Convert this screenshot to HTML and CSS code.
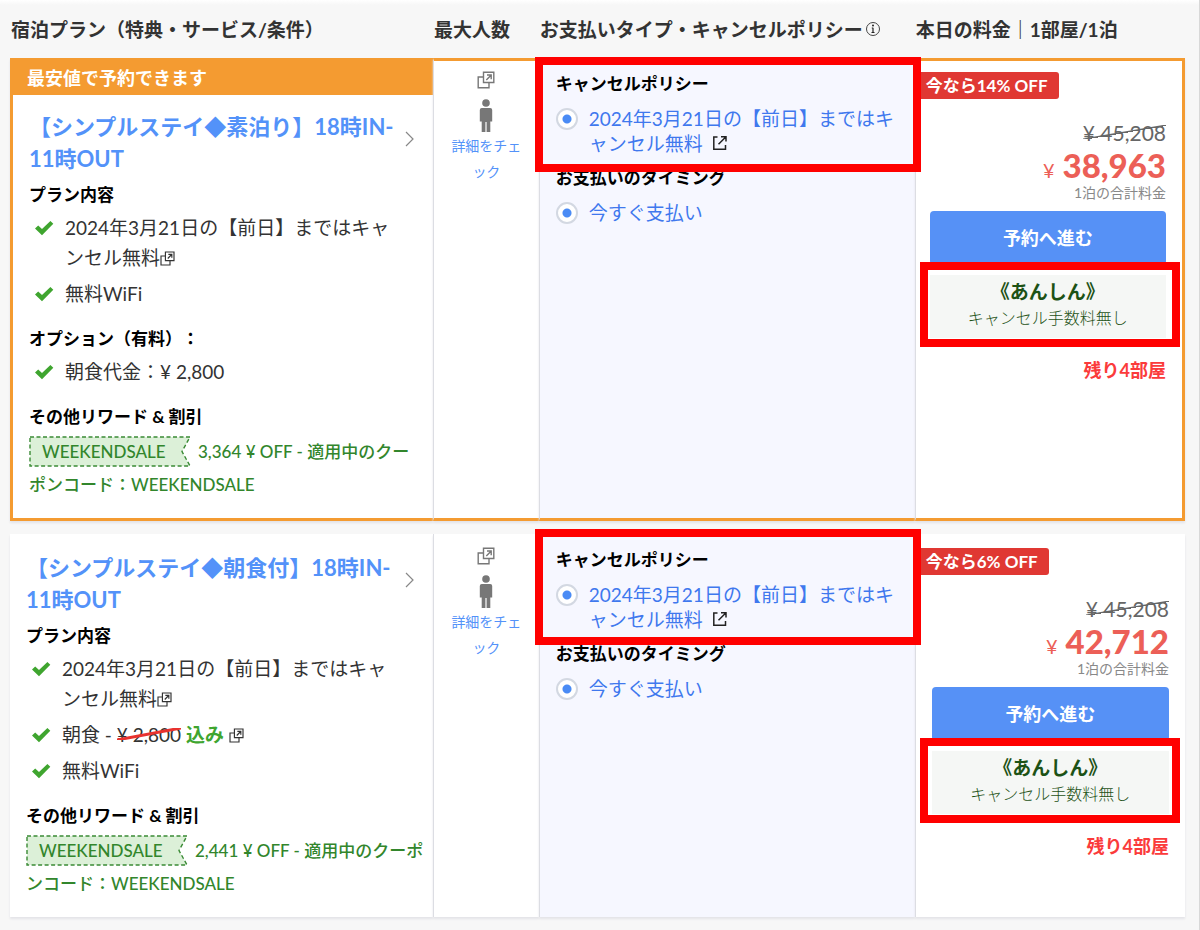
FILE: index.html
```html
<!DOCTYPE html>
<html lang="ja">
<head>
<meta charset="utf-8">
<title>宿泊プラン</title>
<link rel="stylesheet" href="styles.css">
</head>
<body>
<svg class="sprite" aria-hidden="true">
  <symbol id="i-check" viewBox="0 0 20 16"><path d="M1 8.5 4.2 5.6 8 9 16.4 1 19.3 3.8 8 15.2z" fill="#3fa52f"/></symbol>
  <symbol id="i-popup" viewBox="0 0 18 18"><path d="M6.5 1.2h10.3v10.3H6.5zM6 6H1.2v10.8H12V12M9.3 9 14 4.2M10 4h4.2v4.2" fill="none" stroke="currentColor" stroke-width="1.4"/></symbol>
  <symbol id="i-person" viewBox="0 0 16 34"><circle cx="8" cy="4" r="3.8" fill="#777"/><path d="M3.8 9h8.4q2 0 2 2v11.5h-1.9V33H8.6V23H7.4v10H3.7V22.500H1.800V11q0-2 2-2z" fill="#777"/></symbol>
  <symbol id="i-chevron" viewBox="0 0 10 16"><path d="M1 1l7 7-7 7" fill="none" stroke="#888" stroke-width="1.2"/></symbol>
  <symbol id="i-external" viewBox="0 0 16 16"><path d="M5.500 2H1.800v12.200H13.500V10M9 1.700h5V6.500M14 1.700 6.500 9.200" fill="none" stroke="#222" stroke-width="1.500"/></symbol>
  <symbol id="i-info" viewBox="0 0 16 16"><circle cx="8" cy="8" r="6.500" fill="none" stroke="#444"/><path d="M8 6.800v4.700M6.800 7H8M6.500 11.500h3" fill="none" stroke="#222" stroke-width="1.200"/><circle cx="8" cy="4.600" r="1" fill="#222"/></symbol>
  <symbol id="i-coupon" viewBox="0 0 162 31"><path d="M1 1H161L153 15.500 161 30H1z" fill="#dcf0d8" stroke="#3a8a35" stroke-width="1.400" stroke-dasharray="4 2.500"/></symbol>
</svg>
<main class="page">
<table class="plans">
  <colgroup><col class="c-plan"><col class="c-people"><col class="c-pay"><col class="c-price"></colgroup>
  <thead>
    <tr>
      <th scope="col">宿泊プラン（特典・サービス/条件）</th>
      <th scope="col">最大人数</th>
      <th scope="col">お支払いタイプ・キャンセルポリシー<svg class="info"><use href="#i-info"/></svg></th>
      <th scope="col">本日の料金｜1部屋/1泊</th>
    </tr>
  </thead>
  <tbody>
    <tr class="plan best">
      <td>
        <p class="banner">最安値で予約できます</p>
        <div class="detail">
          <div class="title">
            <h2><a href="#plan1">【シンプルステイ◆素泊り】18時IN-<br>11時OUT</a></h2>
            <svg class="chevron"><use href="#i-chevron"/></svg>
          </div>
          <h3>プラン内容</h3>
          <ul>
            <li><svg class="check"><use href="#i-check"/></svg>2024年3月21日の【前日】まではキャ<br>ンセル無料<svg class="pop"><use href="#i-popup"/></svg></li>
            <li><svg class="check"><use href="#i-check"/></svg>無料WiFi</li>
          </ul>
          <h3>オプション（有料）：</h3>
          <ul>
            <li><svg class="check"><use href="#i-check"/></svg>朝食代金：¥ 2,800</li>
          </ul>
          <h3>その他リワード &amp; 割引</h3>
          <p class="reward"><span class="coupon"><svg class="ticket"><use href="#i-coupon"/></svg><span class="code">WEEKENDSALE</span></span>3,364 ¥ OFF - 適用中のクー<br>ポンコード：WEEKENDSALE</p>
        </div>
      </td>
      <td class="people">
        <svg class="popup"><use href="#i-popup"/></svg>
        <svg class="person"><use href="#i-person"/></svg>
        <a href="#people1">詳細をチェ<br>ック</a>
      </td>
      <td class="pay">
        <div class="policy">
          <h3>キャンセルポリシー</h3>
          <label class="option"><input type="radio" name="policy1" checked><span>2024年3月21日の【前日】まではキ<br>ャンセル無料 <svg class="ext"><use href="#i-external"/></svg></span></label>
          <span class="frame"></span>
        </div>
        <div class="timing">
          <h3>お支払いのタイミング</h3>
          <label class="option"><input type="radio" name="timing1" checked><span>今すぐ支払い</span></label>
        </div>
      </td>
      <td class="price">
        <span class="badge">今なら14% OFF</span>
        <div class="amounts">
          <p class="old"><s>¥ 45,208</s></p>
          <p class="now"><span class="yen">¥</span> 38,963</p>
          <p class="note">1泊の合計料金</p>
          <button type="button">予約へ進む</button>
          <div class="safe"><strong>《あんしん》</strong><span>キャンセル手数料無し</span><span class="frame"></span></div>
          <p class="left">残り4部屋</p>
        </div>
      </td>
    </tr>
    <tr class="plan">
      <td>
        <div class="detail">
          <div class="title">
            <h2><a href="#plan2">【シンプルステイ◆朝食付】18時IN-<br>11時OUT</a></h2>
            <svg class="chevron"><use href="#i-chevron"/></svg>
          </div>
          <h3>プラン内容</h3>
          <ul>
            <li><svg class="check"><use href="#i-check"/></svg>2024年3月21日の【前日】まではキャ<br>ンセル無料<svg class="pop"><use href="#i-popup"/></svg></li>
            <li><svg class="check"><use href="#i-check"/></svg>朝食 - <s class="red">¥ 2,800</s> <b>込み</b> <svg class="pop"><use href="#i-popup"/></svg></li>
            <li><svg class="check"><use href="#i-check"/></svg>無料WiFi</li>
          </ul>
          <h3>その他リワード &amp; 割引</h3>
          <p class="reward"><span class="coupon"><svg class="ticket"><use href="#i-coupon"/></svg><span class="code">WEEKENDSALE</span></span>2,441 ¥ OFF - 適用中のクーポ<br>ンコード：WEEKENDSALE</p>
        </div>
      </td>
      <td class="people">
        <svg class="popup"><use href="#i-popup"/></svg>
        <svg class="person"><use href="#i-person"/></svg>
        <a href="#people2">詳細をチェ<br>ック</a>
      </td>
      <td class="pay">
        <div class="policy">
          <h3>キャンセルポリシー</h3>
          <label class="option"><input type="radio" name="policy2" checked><span>2024年3月21日の【前日】まではキ<br>ャンセル無料 <svg class="ext"><use href="#i-external"/></svg></span></label>
          <span class="frame"></span>
        </div>
        <div class="timing">
          <h3>お支払いのタイミング</h3>
          <label class="option"><input type="radio" name="timing2" checked><span>今すぐ支払い</span></label>
        </div>
      </td>
      <td class="price">
        <span class="badge">今なら6% OFF</span>
        <div class="amounts">
          <p class="old"><s>¥ 45,208</s></p>
          <p class="now"><span class="yen">¥</span> 42,712</p>
          <p class="note">1泊の合計料金</p>
          <button type="button">予約へ進む</button>
          <div class="safe"><strong>《あんしん》</strong><span>キャンセル手数料無し</span><span class="frame"></span></div>
          <p class="left">残り4部屋</p>
        </div>
      </td>
    </tr>
  </tbody>
</table>
</main>
</body>
</html>
```
FILE: styles.css
```css
* { box-sizing: border-box; }
body {
  margin: 0;
  min-height: 100vh;
  background: linear-gradient(#fff, #f7f7f7 5px);
  border-right: 1px solid #d8d8d8;
  color: #333;
  font: 19px/30px Lato, "Noto Sans CJK JP", sans-serif;
  text-spacing-trim: space-all;
}
h2, h3, p, ul { margin: 0; padding: 0; font-weight: normal; }
ul { list-style: none; }
a { text-decoration: none; }
.sprite { position: absolute; width: 0; height: 0; }

.page { padding: 0 14px 0 10px; }
.plans {
  width: 100%;
  table-layout: fixed;
  border-collapse: separate;
  border-spacing: 0 13px;
  margin: -13px 0 0;
}
.c-plan { width: 36%; }
.c-people { width: 9%; }
.c-pay { width: 32%; }
.c-price { width: 23%; }
th {
  height: 45px;
  padding: 15px 0 0 1px;
  text-align: left;
  vertical-align: top;
  font-weight: bold;
  white-space: nowrap;
}
.info { width: 16px; height: 16px; margin-left: 2px; }
td {
  padding: 3px 0 0;
  vertical-align: top;
  background: #fff;
  border-left: 1px solid #dcdde3;
  box-shadow: 0 2px 2px #e4e4e8;
}
td:first-child { border-left: 0; }
.best td {
  padding-top: 0;
  border-top: 3px solid #f49b31;
  border-bottom: 3px solid #f49b31;
}
.best td:first-child { border-left: 3px solid #f49b31; }
.best td:last-child { border-right: 3px solid #f49b31; }

.banner {
  padding: 2px 14px;
  background: #f49b31;
  color: #fff;
  font-size: 18px;
  font-weight: bold;
}
.detail { padding: 16px 4px 17px 16px; white-space: nowrap; }
.plan:not(.best) .detail { padding-top: 15px; }
.title {
  display: flex;
  align-items: flex-start;
  justify-content: space-between;
  padding-right: 14px;
}
h2 { font-size: 22px; line-height: 32px; font-weight: bold; }
h2 a { color: #5392f9; }
.chevron { width: 10px; height: 16px; margin-top: 20px; flex: none; }
h3 {
  color: #000;
  font-size: 17px;
  line-height: 24px;
  font-weight: bold;
}
.detail h3 { margin: 18px 0 6px; }
.detail .title + h3 { margin-top: 8px; }
li { position: relative; padding-left: 36px; margin-bottom: 6px; }
.check {
  position: absolute;
  left: 5px;
  top: 7px;
  width: 20px;
  height: 16px;
}
.pop { width: 15px; height: 15px; vertical-align: -1px; }
li b { color: #3fa52f; }
s { position: relative; text-decoration: none; }
s::after {
  content: "";
  position: absolute;
  inset: 5px 0 6px;
  background: linear-gradient(to top left, transparent calc(50% - 1px), #666 calc(50% - 1px), #666 50%, transparent calc(50% + 1px));
}
s.red::after {
  background: linear-gradient(to top left, transparent calc(50% - 2px), #e8322f calc(50% - 1px), #e8322f calc(50% + 1px), transparent calc(50% + 2px));
}
.reward {
  color: #32862c;
  font-size: 17px;
  line-height: 33px;
  font-weight: 500;
}
.coupon {
  display: inline-block;
  position: relative;
  width: 162px;
  margin-right: 7px;
  padding-left: 13px;
}
.ticket { position: absolute; left: 0; top: 1px; width: 162px; height: 31px; }
.code { position: relative; }

.people { text-align: center; color: #777; }
.people svg { display: block; margin: 10px auto 0; }
.popup { width: 18px; height: 18px; }
.person { width: 16px; height: 34px; }
.people a {
  display: block;
  color: #5392f9;
  font-size: 14px;
  line-height: 26px;
}

.pay { background: #f6f7ff; white-space: nowrap; }
.policy { position: relative; padding: 11px 16px 10px; }
.timing { padding: 0 16px; }
.option {
  display: flex;
  align-items: flex-start;
  gap: 11px;
  margin-top: 10px;
  color: #3f78ee;
  line-height: 25px;
}
.option input {
  appearance: none;
  flex: none;
  width: 22px;
  height: 22px;
  margin: 2px 0;
  border: 2px solid #d3d8e2;
  border-radius: 50%;
  background: radial-gradient(circle, #4a8bf5 4px, #fff 5px);
}
.ext { width: 16px; height: 16px; margin-left: 4px; }
.frame {
  position: absolute;
  inset: -4px -6px -6px -5px;
  border: 8px solid #f00;
  pointer-events: none;
  z-index: 1;
}
.plan:not(.best) .policy .frame { inset: -8px -6px -3px -5px; }

.badge {
  display: inline-block;
  margin-top: 11px;
  padding: 0 11px 0 10px;
  border-radius: 0 3px 3px 0;
  background: #e03833;
  color: #fff;
  font-size: 17px;
  line-height: 27px;
  font-weight: bold;
  vertical-align: top;
}
.amounts { padding: 20px 16px 0 14px; text-align: right; }
.plan:not(.best) .amounts { padding-left: 16px; }
.old { color: #666; font-size: 21px; line-height: 28px; }
.now {
  color: #ec5f57;
  font-size: 33px;
  line-height: 37px;
  font-weight: 900;
}
.yen { font-size: 20px; line-height: 20px; font-weight: normal; }
.note { color: #888; font-size: 14px; line-height: 18px; }
button {
  display: block;
  width: 100%;
  height: 54px;
  margin: 9px 0 10px;
  padding: 0;
  border: 0;
  border-radius: 4px;
  background: #5691f6;
  color: #fff;
  font: bold 18px/54px Lato, "Noto Sans CJK JP", sans-serif;
}
.safe {
  position: relative;
  padding: 4px 0 7px;
  background: #f5f7f5;
  color: #1d5215;
  text-align: center;
  line-height: 26px;
}
.safe strong, .safe span { display: block; }
.safe span { font-size: 16px; font-weight: 300; }
.safe .frame { inset: -13px -14px -9px -10px; }
.plan:not(.best) .safe .frame { inset: -13px -11px -9px -12px; }
.left {
  margin-top: 19px;
  color: #fb3b3b;
  font-size: 18px;
  line-height: 26px;
  font-weight: bold;
}
```
